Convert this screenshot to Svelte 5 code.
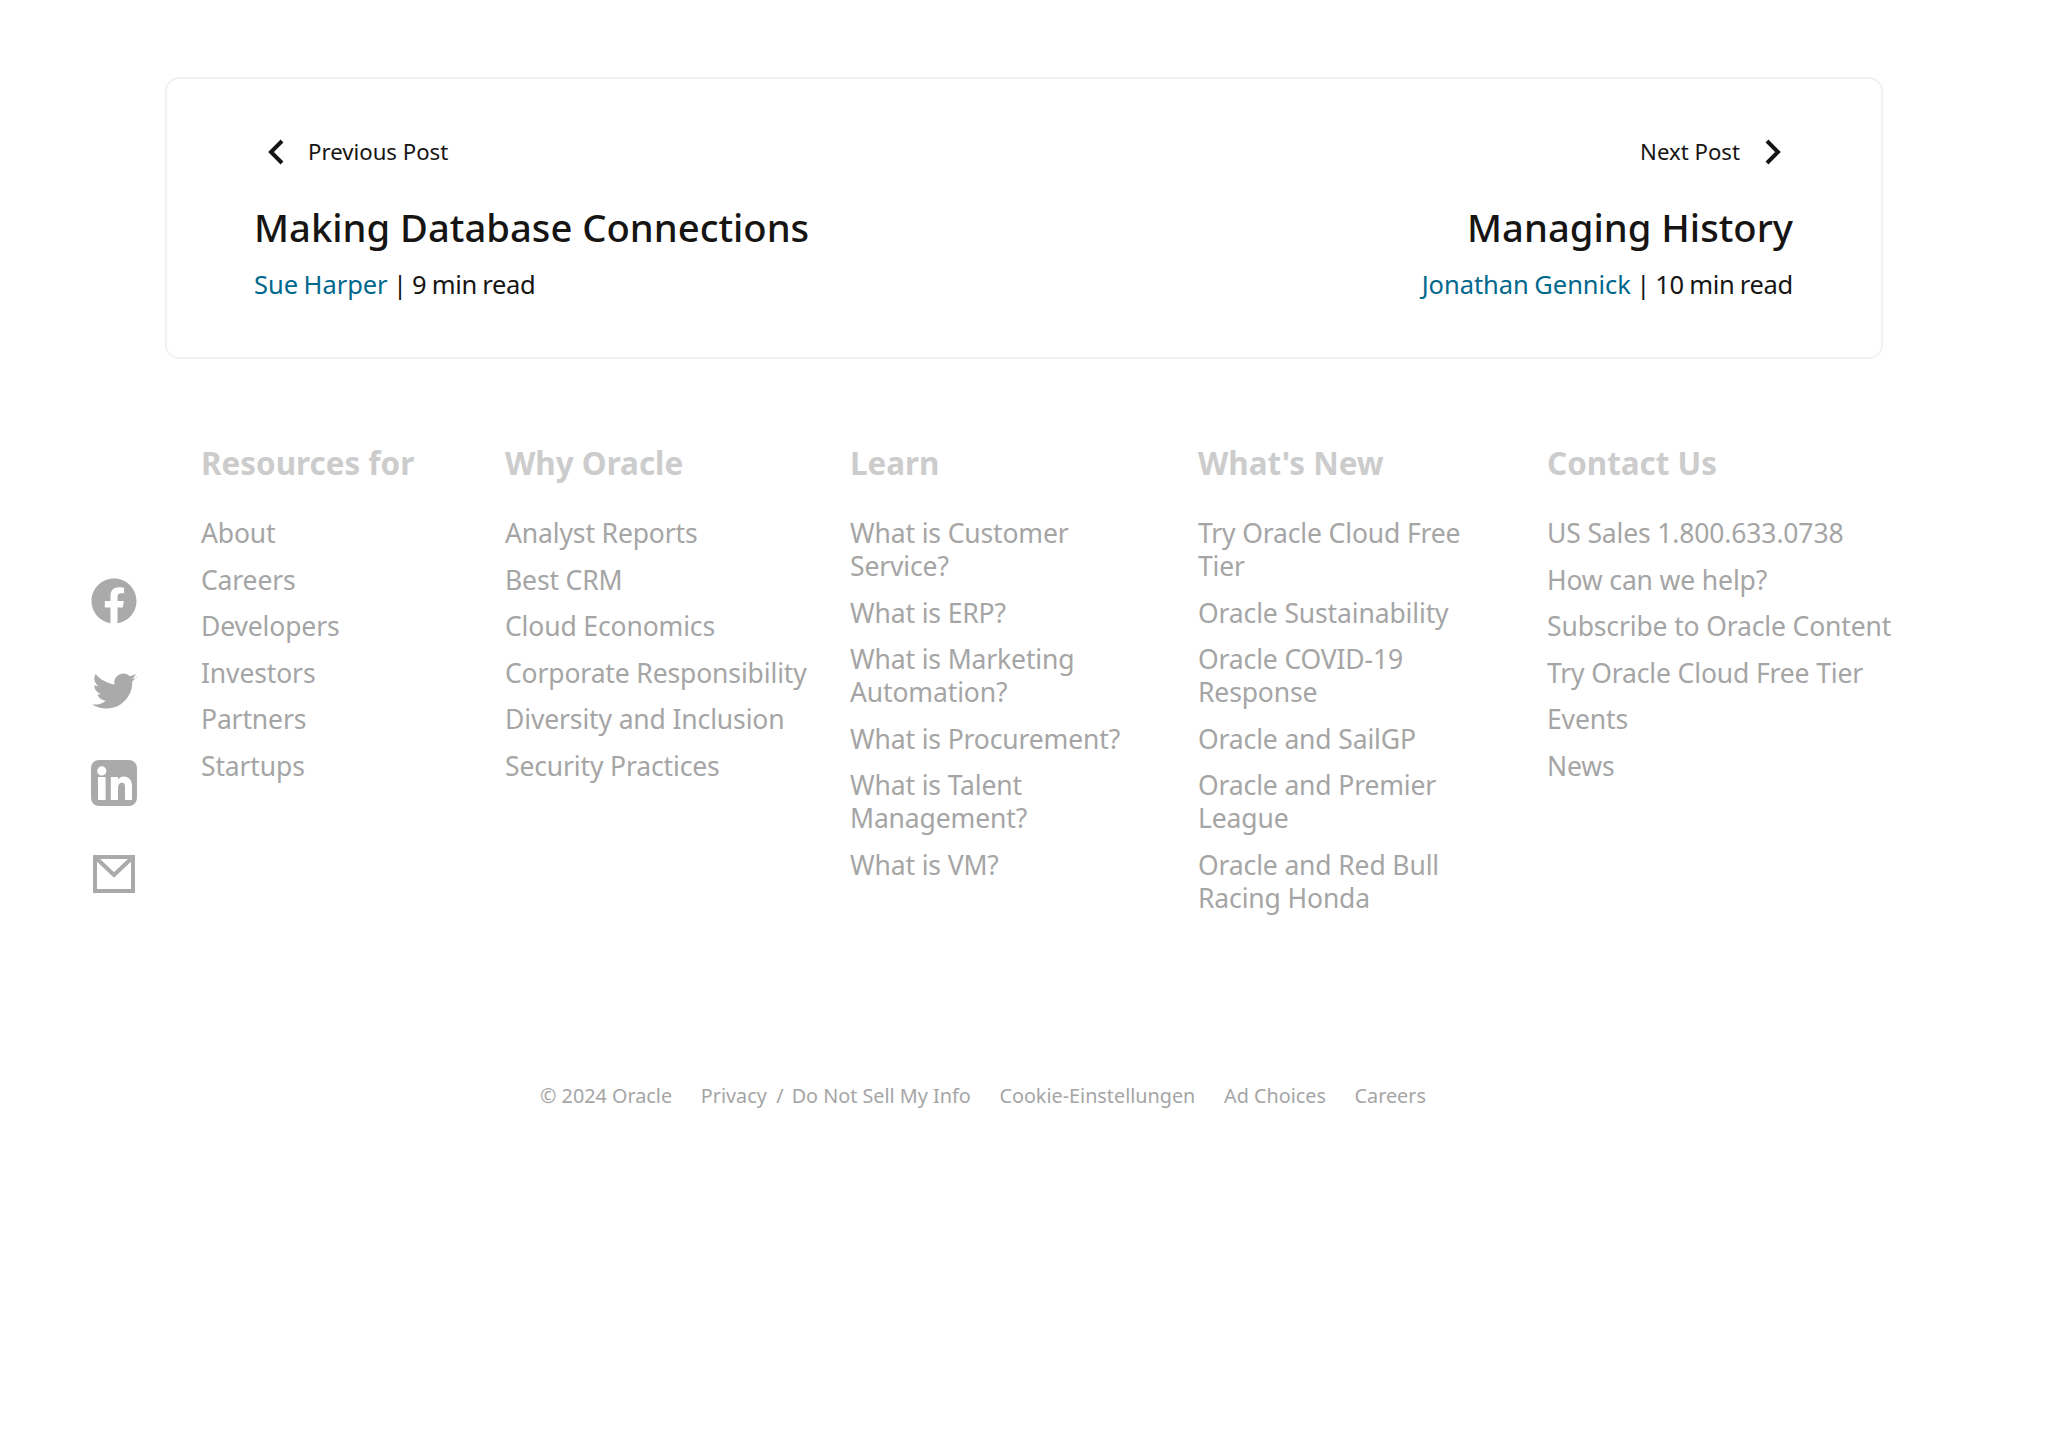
<script>
  const columns = [
    { title: "Resources for", width: 304, links: ["About", "Careers", "Developers", "Investors", "Partners", "Startups"] },
    { title: "Why Oracle", width: 345, links: ["Analyst Reports", "Best CRM", "Cloud Economics", "Corporate Responsibility", "Diversity and Inclusion", "Security Practices"] },
    { title: "Learn", width: 348, links: ["What is Customer Service?", "What is ERP?", "What is Marketing Automation?", "What is Procurement?", "What is Talent Management?", "What is VM?"] },
    { title: "What's New", width: 349, links: ["Try Oracle Cloud Free Tier", "Oracle Sustainability", "Oracle COVID-19 Response", "Oracle and SailGP", "Oracle and Premier League", "Oracle and Red Bull Racing Honda"] },
    { title: "Contact Us", width: 360, links: ["US Sales 1.800.633.0738", "How can we help?", "Subscribe to Oracle Content", "Try Oracle Cloud Free Tier", "Events", "News"] }
  ];
</script>

<div class="page">
  <div class="card">
    <div class="side">
      <div class="nav">
        <svg class="chev" viewBox="0 0 20 28" width="20" height="28"><path d="M16 3 L5 14 L16 25" /></svg>
        <span>Previous Post</span>
      </div>
      <h2>Making Database Connections</h2>
      <p class="meta"><a href="#a">Sue Harper</a> | 9 min read</p>
    </div>
    <div class="side right">
      <div class="nav">
        <span>Next Post</span>
        <svg class="chev" viewBox="0 0 20 28" width="20" height="28"><path d="M4 3 L15 14 L4 25" /></svg>
      </div>
      <h2>Managing History</h2>
      <p class="meta"><a href="#b">Jonathan Gennick</a> | 10 min read</p>
    </div>
  </div>

  <div class="footer">
    <div class="social">
      <svg viewBox="-0.500 -0.500 47 47" width="46" height="46">
        <path d="M46 23C46 10.300 35.700 0 23 0S0 10.300 0 23c0 11.500 8.400 21 19.400 22.700V29.700h-5.800V23h5.800v-5.100c0-5.800 3.400-9 8.700-9 2.500 0 5.200.5 5.200.5v5.700h-2.900c-2.900 0-3.800 1.800-3.800 3.600V23h6.400l-1 6.700h-5.400v16C37.600 44 46 34.500 46 23z" />
      </svg>
      <svg viewBox="1.300 2.600 22.300 18.600" width="46" height="46">
        <path d="M23.500 4.900c-.8.400-1.700.6-2.400.7.900-.5 1.600-1.400 1.900-2.400-.9.5-1.800.9-2.800 1.100-.8-.9-2-1.400-3.200-1.400-2.400 0-4.400 2-4.400 4.400 0 .3 0 .7.1 1C9 7.600 5.700 5.900 3.500 3.200c-.4.700-.6 1.400-.6 2.200 0 1.500.8 2.900 2 3.700-.7 0-1.400-.2-2-.6v.1c0 2.100 1.500 3.900 3.500 4.300-.4.1-.8.2-1.200.2-.3 0-.6 0-.8-.1.6 1.800 2.200 3 4.100 3.100-1.500 1.200-3.400 1.900-5.500 1.900-.4 0-.7 0-1.100-.1 2 1.300 4.300 2 6.800 2 8.100 0 12.600-6.700 12.600-12.600v-.6c.9-.6 1.600-1.400 2.200-2.300z" />
      </svg>
      <svg viewBox="0 0 46 46" width="46" height="46">
        <path fill-rule="evenodd" d="M8 0h30a8 8 0 0 1 8 8v30a8 8 0 0 1-8 8H8a8 8 0 0 1-8-8V8a8 8 0 0 1 8-8zM7 17v23h7.600V17zM10.800 6.300a4.600 4.600 0 1 0 0 9.200 4.600 4.600 0 0 0 0-9.200zM19.800 17v23h7.200V28c0-3.300 1.300-5.300 4-5.300s3 2.200 3 5.300v12h7V26.500c0-6.500-3-10-8.200-10-3 0-4.800 1.400-5.800 3.400V17z" />
      </svg>
      <svg viewBox="-2 -4 46 46" width="46" height="46" class="mail">
        <path d="M2 2h38v34H2z M2 2l19 18L40 2" />
      </svg>
    </div>

    <div class="cols">
      {#each columns as col}
        <div class="col" style="width: {col.width}px">
          <h3>{col.title}</h3>
          <ul>
            {#each col.links as link}
              <li>{link}</li>
            {/each}
          </ul>
        </div>
      {/each}
    </div>
  </div>

  <div class="legal">
    <span>© 2024 Oracle</span>
    <span>Privacy<span class="slash">/</span>Do Not Sell My Info</span>
    <span>Cookie-Einstellungen</span>
    <span>Ad Choices</span>
    <span>Careers</span>
  </div>
</div>

<style>
  :global(body) {
    margin: 0;
    background: #fff;
  }

  .page {
    height: 1447px;
    padding-top: 77px;
    box-sizing: border-box;
    font-family: "Noto Sans", "Open Sans", sans-serif;
    overflow: hidden;
  }

  .card {
    width: 1718px;
    height: 282px;
    margin-left: 165px;
    padding: 54px 88px 0 87px;
    box-sizing: border-box;
    border: 2px solid #f2f2f2;
    border-radius: 14px;
    display: flex;
    justify-content: space-between;
  }

  .side.right {
    text-align: right;
  }

  .nav {
    display: flex;
    align-items: center;
    gap: 22.500px;
    height: 36px;
    padding-left: 11.500px;
    font-size: 22.200px;
    color: #161513;
  }

  .right .nav {
    justify-content: flex-end;
    padding: 0 10.500px 0 0;
  }

  .chev {
    margin-top: 2px;
    fill: none;
    stroke: #161513;
    stroke-width: 4;
  }

  h2 {
    margin: 32px 0 0;
    font-size: 38.200px;
    line-height: 52px;
    font-weight: 500;
    color: #161513;
  }

  .meta {
    margin: 13px 0 0;
    font-size: 25.500px;
    line-height: 36px;
    letter-spacing: -0.3px;
    word-spacing: -1px;
    color: #161513;
  }

  .meta a {
    letter-spacing: -0.05px;
    color: #00688c;
    text-decoration: none;
  }

  .footer {
    display: flex;
    margin-top: 82px;
  }

  .social {
    width: 110px;
    margin-left: 91px;
    padding-top: 137px;
    display: flex;
    flex-direction: column;
    align-items: flex-start;
    gap: 45px;
    fill: #aaa;
    flex: none;
  }

  .mail {
    fill: none;
    stroke: #aaa;
    stroke-width: 4;
  }

  .cols {
    display: flex;
  }

  h3 {
    margin: 0 0 32px;
    font-size: 31.400px;
    line-height: 44px;
    font-weight: 700;
    color: #ccc;
  }

  ul {
    list-style: none;
    margin: 0;
    padding: 0;
    display: flex;
    flex-direction: column;
    gap: 13.500px;
  }

  li {
    font-size: 26.500px;
    line-height: 33px;
    letter-spacing: -0.14px;
    color: #a5a5a5;
  }

  .col:nth-child(3) li,
  .col:nth-child(4) li {
    padding-right: 38px;
  }

  .legal {
    display: flex;
    gap: 28.700px;
    margin: 167px 0 0 540px;
    font-size: 19.800px;
    line-height: 28px;
    color: #a5a5a5;
  }

  .slash {
    margin: 0 8px 0 9.500px;
  }
</style>
